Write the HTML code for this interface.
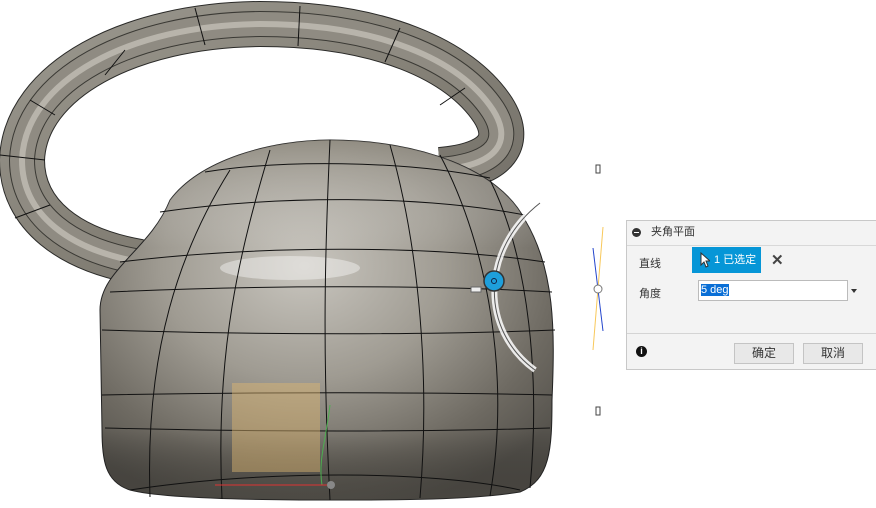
<!DOCTYPE html>
<html><head><meta charset="utf-8"><style>
html,body{margin:0;padding:0;background:#fff;width:876px;height:508px;overflow:hidden;font-family:"Liberation Sans","Noto Sans CJK SC",sans-serif}
#dlg{position:absolute;left:626px;top:220px;width:249px;height:148px;border:1px solid #c8c8c8;background:#f3f3f3;font-size:11px;color:#333}
.hd{height:24px;border-bottom:1px solid #d8d8d8;line-height:22px;padding-left:24px;position:relative}
.hd:before{content:"";position:absolute;left:5px;top:7px;width:9px;height:9px;border-radius:50%;background:#333}
.hd:after{content:"";position:absolute;left:7px;top:11px;width:5px;height:1px;background:#fff}
.lab{position:absolute;left:12px}
.sel{position:absolute;left:65px;top:26px;width:69px;height:26px;background:#0696d7;color:#fff;line-height:26px;font-size:11px}
.inp{position:absolute;left:71px;top:59px;width:148px;height:19px;background:#fff;border:1px solid #bbb}
.btn{position:absolute;top:122px;width:58px;height:19px;border:1px solid #c4c4c4;background:#e8e8e8;text-align:center;line-height:19px;font-size:12px}
</style></head><body>
<svg width="876" height="508" style="position:absolute;left:0;top:0">
<defs>
<linearGradient id="hg" x1="0" y1="0" x2="1" y2="1"><stop offset="0" stop-color="#9a978e"/><stop offset=".5" stop-color="#858177"/><stop offset="1" stop-color="#6f6c65"/></linearGradient>
<radialGradient id="bg" cx=".45" cy=".35" r=".7"><stop offset="0" stop-color="#c9c6bf"/><stop offset=".45" stop-color="#9f9b92"/><stop offset=".8" stop-color="#6e6a62"/><stop offset="1" stop-color="#57544e"/></radialGradient>
<linearGradient id="bv" x1="0" y1="0" x2="0" y2="1"><stop offset="0" stop-color="#8d887c" stop-opacity=".5"/><stop offset=".3" stop-color="#fff" stop-opacity="0"/><stop offset=".8" stop-color="#000" stop-opacity="0"/><stop offset="1" stop-color="#3a3833" stop-opacity=".5"/></linearGradient>
</defs>
<g fill="none">
<path d="M140 262 C70 250 22 215 22 160 C25 80 130 25 260 24 C380 24 460 60 493 110 C512 140 500 165 440 170" stroke="#2a2a28" stroke-width="46"/>
<path d="M140 262 C70 250 22 215 22 160 C25 80 130 25 260 24 C380 24 460 60 493 110 C512 140 500 165 440 170" stroke="url(#hg)" stroke-width="44"/>
<path d="M140 262 C70 250 22 215 22 160 C25 80 130 25 260 24 C380 24 460 60 493 110 C512 140 500 165 440 170" stroke="#3a3934" stroke-width="26"/>
<path d="M140 262 C70 250 22 215 22 160 C25 80 130 25 260 24 C380 24 460 60 493 110 C512 140 500 165 440 170" stroke="#8f8b82" stroke-width="24"/>
<path d="M140 262 C70 250 22 215 22 160 C25 80 130 25 260 24 C380 24 460 60 493 110 C512 140 500 165 440 170" stroke="#c2beb5" stroke-width="6" opacity=".8"/>
</g>
<g stroke="#111" stroke-width="1">
<line x1="105" y1="75" x2="125" y2="50"/><line x1="195" y1="8" x2="205" y2="45"/><line x1="300" y1="6" x2="298" y2="46"/><line x1="400" y1="28" x2="385" y2="62"/><line x1="30" y1="100" x2="55" y2="115"/><line x1="0" y1="155" x2="45" y2="160"/><line x1="15" y1="218" x2="50" y2="205"/><line x1="465" y1="88" x2="440" y2="105"/>
</g>
<path d="M100 310 C100 270 150 250 170 200 C200 160 270 140 330 140 C420 140 500 170 525 220 C555 270 555 330 552 400 C552 450 550 480 520 492 C470 500 400 500 330 500 C250 500 160 498 130 490 C105 482 102 460 102 430 Z" fill="url(#bg)" stroke="#222" stroke-width="1"/>
<path d="M100 310 C100 270 150 250 170 200 C200 160 270 140 330 140 C420 140 500 170 525 220 C555 270 555 330 552 400 C552 450 550 480 520 492 C470 500 400 500 330 500 C250 500 160 498 130 490 C105 482 102 460 102 430 Z" fill="url(#bv)"/>
<ellipse cx="290" cy="268" rx="70" ry="12" fill="#fff" opacity=".4"/>
<g fill="none" stroke="#111" stroke-width="1">
<path d="M205 172 C280 160 400 160 490 178"/>
<path d="M160 212 C280 195 420 195 525 215"/>
<path d="M120 262 C260 245 430 245 545 262"/>
<path d="M110 292 C260 285 430 285 552 292"/>
<path d="M102 330 C260 335 430 335 555 330"/>
<path d="M102 395 C260 392 430 392 552 395"/>
<path d="M105 428 C260 432 430 432 550 428"/>
<path d="M130 490 C260 470 430 470 520 490"/>
<path d="M230 170 C180 250 145 350 150 497"/>
<path d="M270 150 C240 250 215 350 222 499"/>
<path d="M330 140 C325 250 322 350 330 500"/>
<path d="M390 145 C420 250 430 380 420 498"/>
<path d="M440 155 C490 250 510 380 490 496"/>
<path d="M490 180 C530 260 540 380 530 488"/>
</g>
<rect x="232" y="383" width="88" height="89" fill="#e0b870" opacity=".45"/>
<path d="M330 405 C326 440 318 460 322 485" stroke="#4caf50" stroke-width="1" fill="none"/>
<path d="M215 485 L330 485" stroke="#d33" stroke-width="1"/>
<circle cx="331" cy="485" r="4" fill="#888"/>
<path d="M540 203 C480 250 480 330 535 370" fill="none" stroke="#fff" stroke-width="6" opacity=".85"/>
<path d="M540 203 C480 250 480 330 535 370" fill="none" stroke="#555" stroke-width="1"/>
<circle cx="494" cy="281" r="10" fill="#1e9fdb" stroke="#333" stroke-width="1.5"/>
<circle cx="494" cy="281" r="2.5" fill="none" stroke="#124"/>
<rect x="471" y="287" width="10" height="5" fill="#eee" stroke="#666"/>
<rect x="596" y="165" width="4" height="8" fill="#fff" stroke="#444"/>
<rect x="596" y="407" width="4" height="8" fill="#fff" stroke="#444"/>
<line x1="603" y1="227" x2="593" y2="350" stroke="#f8c85a"/>
<line x1="593" y1="248" x2="603" y2="331" stroke="#2244cc"/>
<circle cx="598" cy="289" r="4" fill="#fff" stroke="#777"/>
</svg>
<div id="dlg">
<div class="hd">夹角平面</div>
<div class="lab" style="top:34px">直线</div>
<div class="sel"><svg width="10" height="16" style="position:absolute;left:8px;top:5px"><path d="M1 1 L1 13 L4 10 L6 15 L8 14 L6 9 L10 9 Z" fill="#fff" stroke="#333" stroke-width="1"/></svg><span style="position:absolute;left:22px">1 已选定</span></div>
<div style="position:absolute;left:144px;top:30px;font-size:15px;font-weight:bold;color:#444">✕</div>
<div class="lab" style="top:64px">角度</div>
<div class="inp"><span style="background:#0a6fd6;color:#fff;margin-left:2px;font-size:11px;line-height:19px">5 deg</span></div>
<div style="position:absolute;left:224px;top:68px;border-left:3px solid transparent;border-right:3px solid transparent;border-top:4px solid #333"></div>
<div style="position:absolute;left:0;right:0;top:112px;border-top:1px solid #d4d4d4"></div>
<div style="position:absolute;left:9px;top:125px;width:11px;height:11px;border-radius:50%;background:#111;color:#fff;font-size:9px;font-weight:bold;text-align:center;line-height:11px">i</div>
<div class="btn" style="left:107px">确定</div>
<div class="btn" style="left:176px">取消</div>
</div>
</body></html>
